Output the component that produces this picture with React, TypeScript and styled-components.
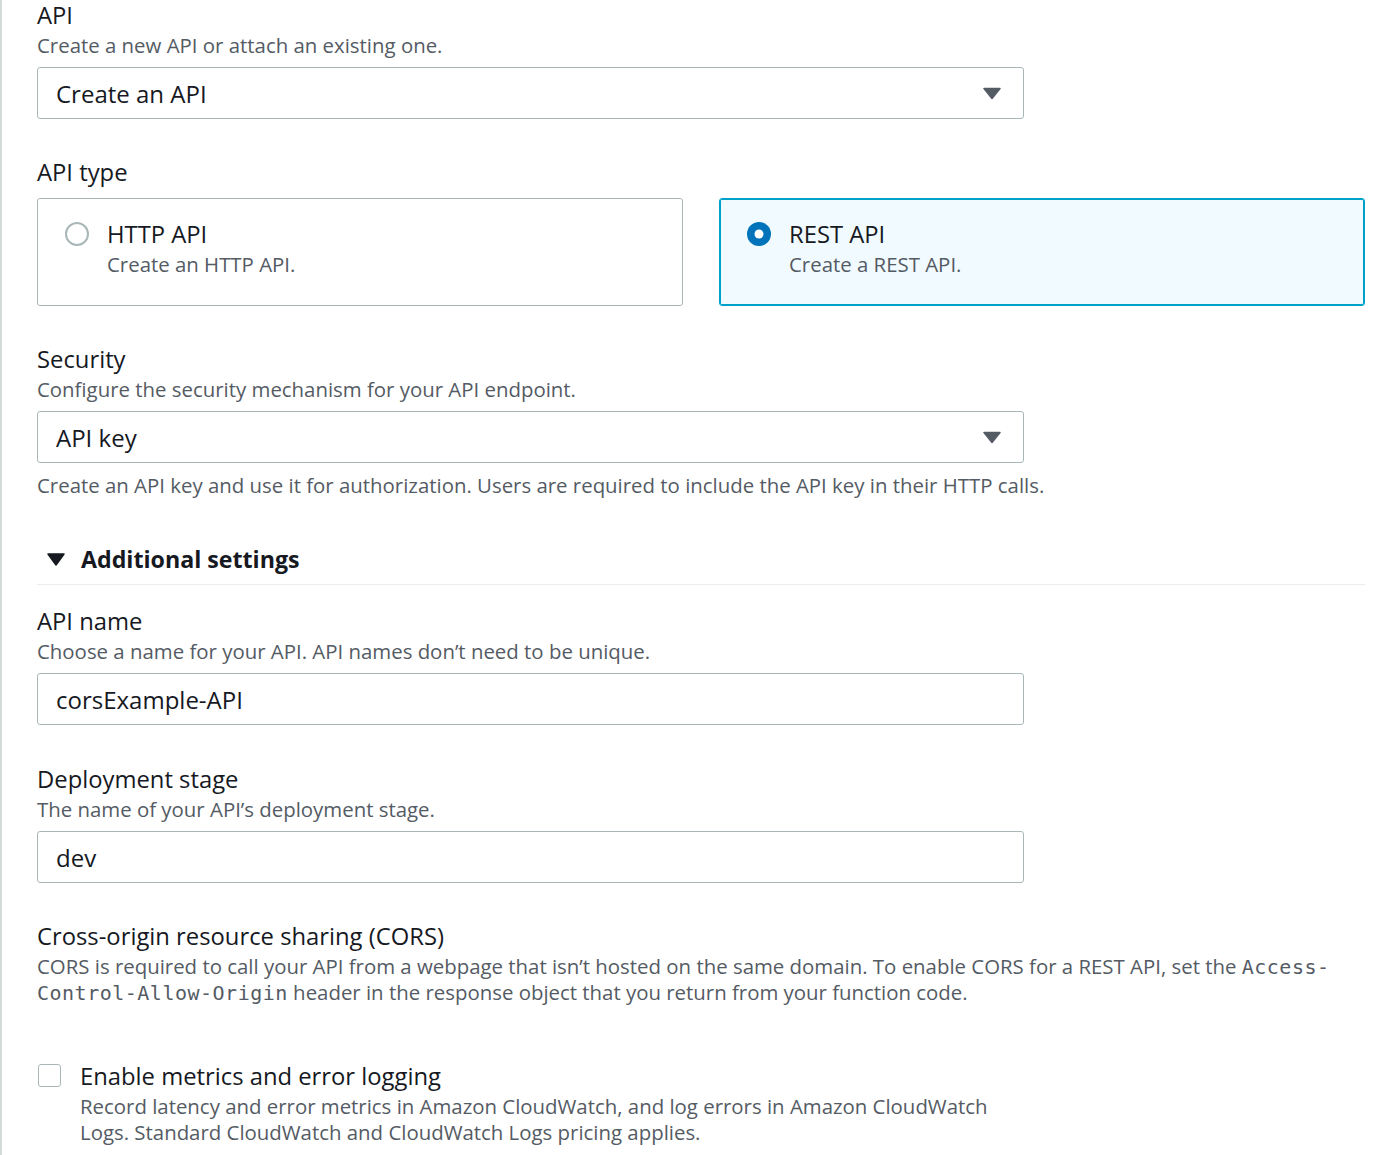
import { FC } from 'react'
import styled, { createGlobalStyle } from 'styled-components'

const GlobalStyle = createGlobalStyle`
	html, body {
		margin: 0;
		padding: 0;
		background: #ffffff;
	}
	body {
		font-family: 'Open Sans', 'Noto Sans', sans-serif;
		color: #16191f;
	}
	* {
		box-sizing: border-box;
	}
`

const Page = styled.div`
	min-height: 1155px;
	border-left: 2px solid #d5dbdb;
	padding: 0 35px;
	width: 1400px;
`

const Content = styled.div`
	width: 1328px;
	display: flex;
	flex-direction: column;
`

const Field = styled.div<{ $gap?: number }>`
	display: flex;
	flex-direction: column;
	margin-top: ${({ $gap }) => $gap ?? 0}px;
`

const Label = styled.div`
	font-size: 23.8px;
	line-height: 30px;
	color: #16191f;
`

const Description = styled.div`
	font-size: 20.4px;
	line-height: 26px;
	margin-top: 2px;
	color: #545b64;
`

const Mono = styled.code`
	font-family: 'DejaVu Sans Mono', 'Liberation Mono', monospace;
	font-size: 20px;
	line-height: 1;
	letter-spacing: 0.5px;
	color: #545b64;
`

const SelectBox = styled.div`
	margin-top: 9px;
	width: 987px;
	height: 52px;
	border: 1px solid #aab7b8;
	border-radius: 3px;
	display: flex;
	align-items: center;
	justify-content: space-between;
	padding: 0 22px 0 18px;
	font-size: 24px;
	color: #16191f;
`

const Input = styled(SelectBox)`
	margin-top: 9px;
`

const HelpText = styled(Description)`
	margin-top: 9px;
`

const Tiles = styled.div`
	margin-top: 11px;
	display: grid;
	grid-template-columns: 646px 646px;
	column-gap: 36px;
`

const Tile = styled.div<{ $selected?: boolean }>`
	height: 108px;
	border: 1px solid ${({ $selected }) => ($selected ? '#00a1c9' : '#aab7b8')};
	box-shadow: ${({ $selected }) => ($selected ? 'inset 0 0 0 1px #00a1c9' : 'none')};
	background: ${({ $selected }) => ($selected ? '#f1faff' : '#ffffff')};
	border-radius: 3px;
	display: flex;
	align-items: flex-start;
	padding: 20px 0 0 27px;
	gap: 18px;
`

const RadioWrap = styled.div`
	width: 24px;
	height: 24px;
	margin-top: 3px;
	flex-shrink: 0;
`

const TileText = styled.div`
	display: flex;
	flex-direction: column;
`

const Expander = styled.div`
	margin-top: 46px;
	display: flex;
	align-items: center;
	gap: 16px;
	padding-left: 10px;
	font-size: 23.2px;
	line-height: 30px;
	font-weight: 700;
	color: #16191f;
	padding-bottom: 10px;
	border-bottom: 1px solid #eaeded;
`

const CheckRow = styled.div`
	margin-top: 56px;
	display: flex;
	align-items: flex-start;
	gap: 19px;
`

const CheckBox = styled.div`
	width: 23px;
	height: 23px;
	margin-top: 3px;
	margin-left: 1px;
	border: 1px solid #aab7b8;
	border-radius: 3px;
	flex-shrink: 0;
`

const CheckText = styled.div`
	display: flex;
	flex-direction: column;
	max-width: 930px;
`

const Caret: FC = () => (
	<svg width="18" height="13" viewBox="0 0 18 13">
		<path d="M1 1.5 H17 L9 11.5 Z" fill="#545b64" stroke="#545b64" strokeWidth="1.5" strokeLinejoin="round" />
	</svg>
)

const Radio: FC<{ checked?: boolean }> = ({ checked }) => (
	<RadioWrap>
		<svg width="24" height="24" viewBox="0 0 24 24">
			{checked ? (
				<>
					<circle cx="12" cy="12" r="12" fill="#0073bb" />
					<circle cx="12" cy="12" r="4.5" fill="#ffffff" />
				</>
			) : (
				<circle cx="12" cy="12" r="11" fill="#ffffff" stroke="#aab7b8" strokeWidth="2" />
			)}
		</svg>
	</RadioWrap>
)

const App: FC = () => {
	return (
		<>
			<GlobalStyle />
			<Page>
				<Content>
					<Field>
						<Label>API</Label>
						<Description>Create a new API or attach an existing one.</Description>
						<SelectBox>
							<span>Create an API</span>
							<Caret />
						</SelectBox>
					</Field>

					<Field $gap={38}>
						<Label>API type</Label>
						<Tiles>
							<Tile>
								<Radio />
								<TileText>
									<Label>HTTP API</Label>
									<Description>Create an HTTP API.</Description>
								</TileText>
							</Tile>
							<Tile $selected>
								<Radio checked />
								<TileText>
									<Label>REST API</Label>
									<Description>Create a REST API.</Description>
								</TileText>
							</Tile>
						</Tiles>
					</Field>

					<Field $gap={38}>
						<Label>Security</Label>
						<Description>Configure the security mechanism for your API endpoint.</Description>
						<SelectBox>
							<span>API key</span>
							<Caret />
						</SelectBox>
						<HelpText>
							Create an API key and use it for authorization. Users are required to include the API key in their HTTP calls.
						</HelpText>
					</Field>

					<Expander>
						<svg width="18" height="13" viewBox="0 0 18 13">
							<path d="M1 1 H17 L9 12 Z" fill="#16191f" stroke="#16191f" strokeWidth="1.5" strokeLinejoin="round" />
						</svg>
						<span>Additional settings</span>
					</Expander>

					<Field $gap={21}>
						<Label>API name</Label>
						<Description>Choose a name for your API. API names don’t need to be unique.</Description>
						<Input>corsExample-API</Input>
					</Field>

					<Field $gap={39}>
						<Label>Deployment stage</Label>
						<Description>The name of your API’s deployment stage.</Description>
						<Input>dev</Input>
					</Field>

					<Field $gap={38}>
						<Label>Cross-origin resource sharing (CORS)</Label>
						<Description>
							CORS is required to call your API from a webpage that isn’t hosted on the same domain. To enable CORS for a
							REST API, set the <Mono>Access-</Mono>
							<Mono>Control-Allow-Origin</Mono> header in the response object that you return from your function code.
						</Description>
					</Field>

					<CheckRow>
						<CheckBox />
						<CheckText>
							<Label>Enable metrics and error logging</Label>
							<Description>
								Record latency and error metrics in Amazon CloudWatch, and log errors in Amazon CloudWatch Logs. Standard
								CloudWatch and CloudWatch Logs pricing applies.
							</Description>
						</CheckText>
					</CheckRow>
				</Content>
			</Page>
		</>
	)
}

export default App
